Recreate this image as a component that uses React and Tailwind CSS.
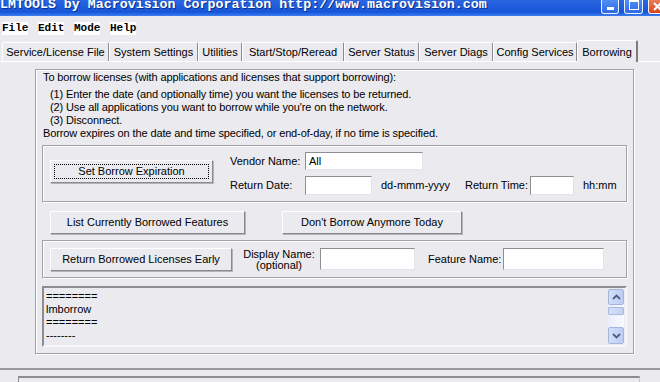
import React from 'react';

const tabs = [
  { label: 'Service/License File', w: 'w-[107px]' },
  { label: 'System Settings', w: 'w-[89px]' },
  { label: 'Utilities', w: 'w-[44px]' },
  { label: 'Start/Stop/Reread', w: 'w-[102px]' },
  { label: 'Server Status', w: 'w-[75px]' },
  { label: 'Server Diags', w: 'w-[74px]' },
  { label: 'Config Services', w: 'w-[84px]' },
];

const menus = ['File', 'Edit', 'Mode', 'Help'];

const btn =
  'h-[23px] flex items-center justify-center bg-[#ebeaef] border border-t-white border-l-white border-r-[#8a898e] border-b-[#8a898e] shadow-[1px_1px_0_#b5b4b9]';
const input =
  'bg-white border border-t-[#8f8e93] border-l-[#8f8e93] border-r-[#e4e3e8] border-b-[#e4e3e8]';
const group =
  'border border-[#a3a2a7] shadow-[inset_1px_1px_0_#fff,1px_1px_0_#fff]';

function Chevron({ up }) {
  return (
    <svg width="9" height="6" viewBox="0 0 9 6">
      <polyline
        points={up ? '1,5 4.5,1.5 8,5' : '1,1 4.5,4.5 8,1'}
        fill="none"
        stroke="#4d6185"
        strokeWidth="1.8"
      />
    </svg>
  );
}

function ScrollBar() {
  return (
    <div className="w-[16px] my-[1px] mr-[1px] flex flex-col bg-[linear-gradient(90deg,#e9eefb,#f7f9fe)]">
      <div className="h-[16px] rounded-[2px] border border-[#a4b5db] bg-[linear-gradient(90deg,#d3def8,#bccdf3)] flex items-center justify-center">
        <Chevron up />
      </div>
      <div className="h-[8px] mt-[2px] rounded-[1px] border border-[#a9b8dc] bg-[linear-gradient(90deg,#d6e0f8,#c3d2f4)]" />
      <div className="flex-1" />
      <div className="h-[17px] rounded-[2px] border border-[#a4b5db] bg-[linear-gradient(90deg,#d3def8,#bccdf3)] flex items-center justify-center">
        <Chevron />
      </div>
    </div>
  );
}

export default function App() {
  return (
    <div className="w-[660px] h-[382px] overflow-hidden bg-[#ebeaef] text-black text-[11px] font-['Liberation_Sans',Arial,sans-serif] flex flex-col">
      {/* title bar */}
      <div className="h-[16px] shrink-0 flex justify-between bg-[linear-gradient(#2a66e0,#1655d8_75%,#3c7ef2)] overflow-hidden">
        <div className="-mt-[2px] leading-none text-[13.3px] font-bold text-white font-['Liberation_Mono',monospace] whitespace-nowrap [text-shadow:1px_1px_0_#0b2f8f]">
          LMTOOLS by Macrovision Corporation http://www.macrovision.com
        </div>
        <div className="flex gap-[5px] -mt-[4px] -mr-[6px]">
          <div className="w-[18px] h-[18px] rounded-b-[3px] border border-white/90 bg-[linear-gradient(#5a97f7,#2c6ae6)] flex items-end justify-center pb-[3px]">
            <div className="w-[7px] h-[3px] bg-white" />
          </div>
          <div className="w-[19px] h-[18px] rounded-b-[3px] border border-white/90 bg-[linear-gradient(#5a97f7,#2c6ae6)] flex items-end justify-center pb-[3px]">
            <div className="w-[10px] h-[10px] border border-white border-t-2" />
          </div>
          <div className="w-[18px] h-[18px] rounded-b-[3px] border border-white/90 bg-[linear-gradient(#f08a66,#d6451f)] flex items-center justify-center pt-[3px]">
            <svg width="9" height="9" viewBox="0 0 9 9">
              <path d="M1 1L8 8M8 1L1 8" stroke="#fff" strokeWidth="2" />
            </svg>
          </div>
        </div>
      </div>

      {/* menu bar */}
      <div className="h-[24px] shrink-0 flex items-start gap-[10px] pl-[2px] pt-[6px] font-['Liberation_Mono',monospace] font-bold text-[11px] leading-[13px]">
        {menus.map((m) => (
          <span key={m} className="bg-white w-[26px] text-center">{m}</span>
        ))}
      </div>

      {/* tabs */}
      <div className="h-[21px] shrink-0 flex items-end pl-[2px] relative z-10">
        {tabs.map((t) => (
          <div
            key={t.label}
            className={`${t.w} h-[19px] flex items-center justify-center rounded-t-[2px] border-t border-l border-r border-t-white border-l-white border-r-[#8a898e]`}
          >
            {t.label}
          </div>
        ))}
        <div className="w-[61px] h-[22px] -mb-px bg-[#ebeaef] flex items-start justify-center pt-[3px] rounded-t-[2px] border-t border-l border-r-2 border-t-white border-l-white border-r-[#7d7c81]">
          Borrowing
        </div>
      </div>

      {/* tab page */}
      <div className="h-[307px] shrink-0 border-t border-white pt-[7px] pl-[35px]">
        <div className="w-[599px] h-[285px] border border-[#a3a2a7] shadow-[inset_1px_1px_0_#fff,1px_1px_0_#fff] flex flex-col pl-[6px]">
          <div className="pl-[1px] pt-[1px] leading-[13px] tracking-[-0.12px]">
            <div className="mb-[4px]">To borrow licenses (with applications and licenses that support borrowing):</div>
            <div className="pl-[7px]">(1) Enter the date (and optionally time) you want the licenses to be returned.</div>
            <div className="pl-[7px]">(2) Use all applications you want to borrow while you're on the network.</div>
            <div className="pl-[7px]">(3) Disconnect.</div>
            <div>Borrow expires on the date and time specified, or end-of-day, if no time is specified.</div>
          </div>

          {/* borrow expiration group */}
          <div className={`${group} mt-[5px] w-[585px] h-[57px] flex items-start`}>
            <button className={`${btn} ml-[7px] mt-[14px] w-[163px] p-[3px]`}>
              <span className="w-full h-full flex items-center justify-center border border-dotted border-black">
                Set Borrow Expiration
              </span>
            </button>
            <div className="ml-[17px] pt-[6px] flex flex-col gap-[6px]">
              <div className="flex items-center">
                <span className="w-[75px]">Vendor Name:</span>
                <div className={`${input} w-[118px] h-[18px] pl-[3px] leading-[16px]`}>All</div>
              </div>
              <div className="flex items-center">
                <span className="w-[75px]">Return Date:</span>
                <div className={`${input} w-[67px] h-[19px]`} />
                <span className="ml-[9px] w-[84px]">dd-mmm-yyyy</span>
                <span className="w-[65px]">Return Time:</span>
                <div className={`${input} w-[44px] h-[19px]`} />
                <span className="ml-[9px]">hh:mm</span>
              </div>
            </div>
          </div>

          <div className="mt-[9px] ml-[8px] flex gap-[37px]">
            <button className={`${btn} w-[195px]`}>List Currently Borrowed Features</button>
            <button className={`${btn} w-[180px]`}>Don't Borrow Anymore Today</button>
          </div>

          {/* return group */}
          <div className={`${group} mt-[6px] w-[585px] h-[38px] flex items-center`}>
            <button className={`${btn} ml-[7px] w-[182px]`}>Return Borrowed Licenses Early</button>
            <div className="ml-[11px] w-[72px] text-center leading-[11px] pt-[1px]">
              Display Name:
              <br />
              (optional)
            </div>
            <div className={`${input} ml-[5px] w-[95px] h-[22px]`} />
            <span className="ml-[13px] w-[75px]">Feature Name:</span>
            <div className={`${input} w-[101px] h-[22px]`} />
          </div>

          {/* output */}
          <div className="mt-[8px] w-[585px] h-[61px] flex border-2 border-t-[#8d8c91] border-l-[#8d8c91] border-r-[#f6f6f8] border-b-[#f6f6f8]">
            <div className="flex-1 pl-[2px] pt-[2px] leading-[13px]">
              <div>========</div>
              <div>lmborrow</div>
              <div>========</div>
              <div>--------</div>
            </div>
            <ScrollBar />
          </div>
        </div>
      </div>

      <div className="h-[2px] shrink-0 bg-[#9a999e]" />
      <div className="mt-[6px] ml-[18px] w-[622px] flex-1 border-t-2 border-l border-r border-t-[#8d8c91] border-l-[#8d8c91] border-r-[#c7c6cb]" />
    </div>
  );
}
